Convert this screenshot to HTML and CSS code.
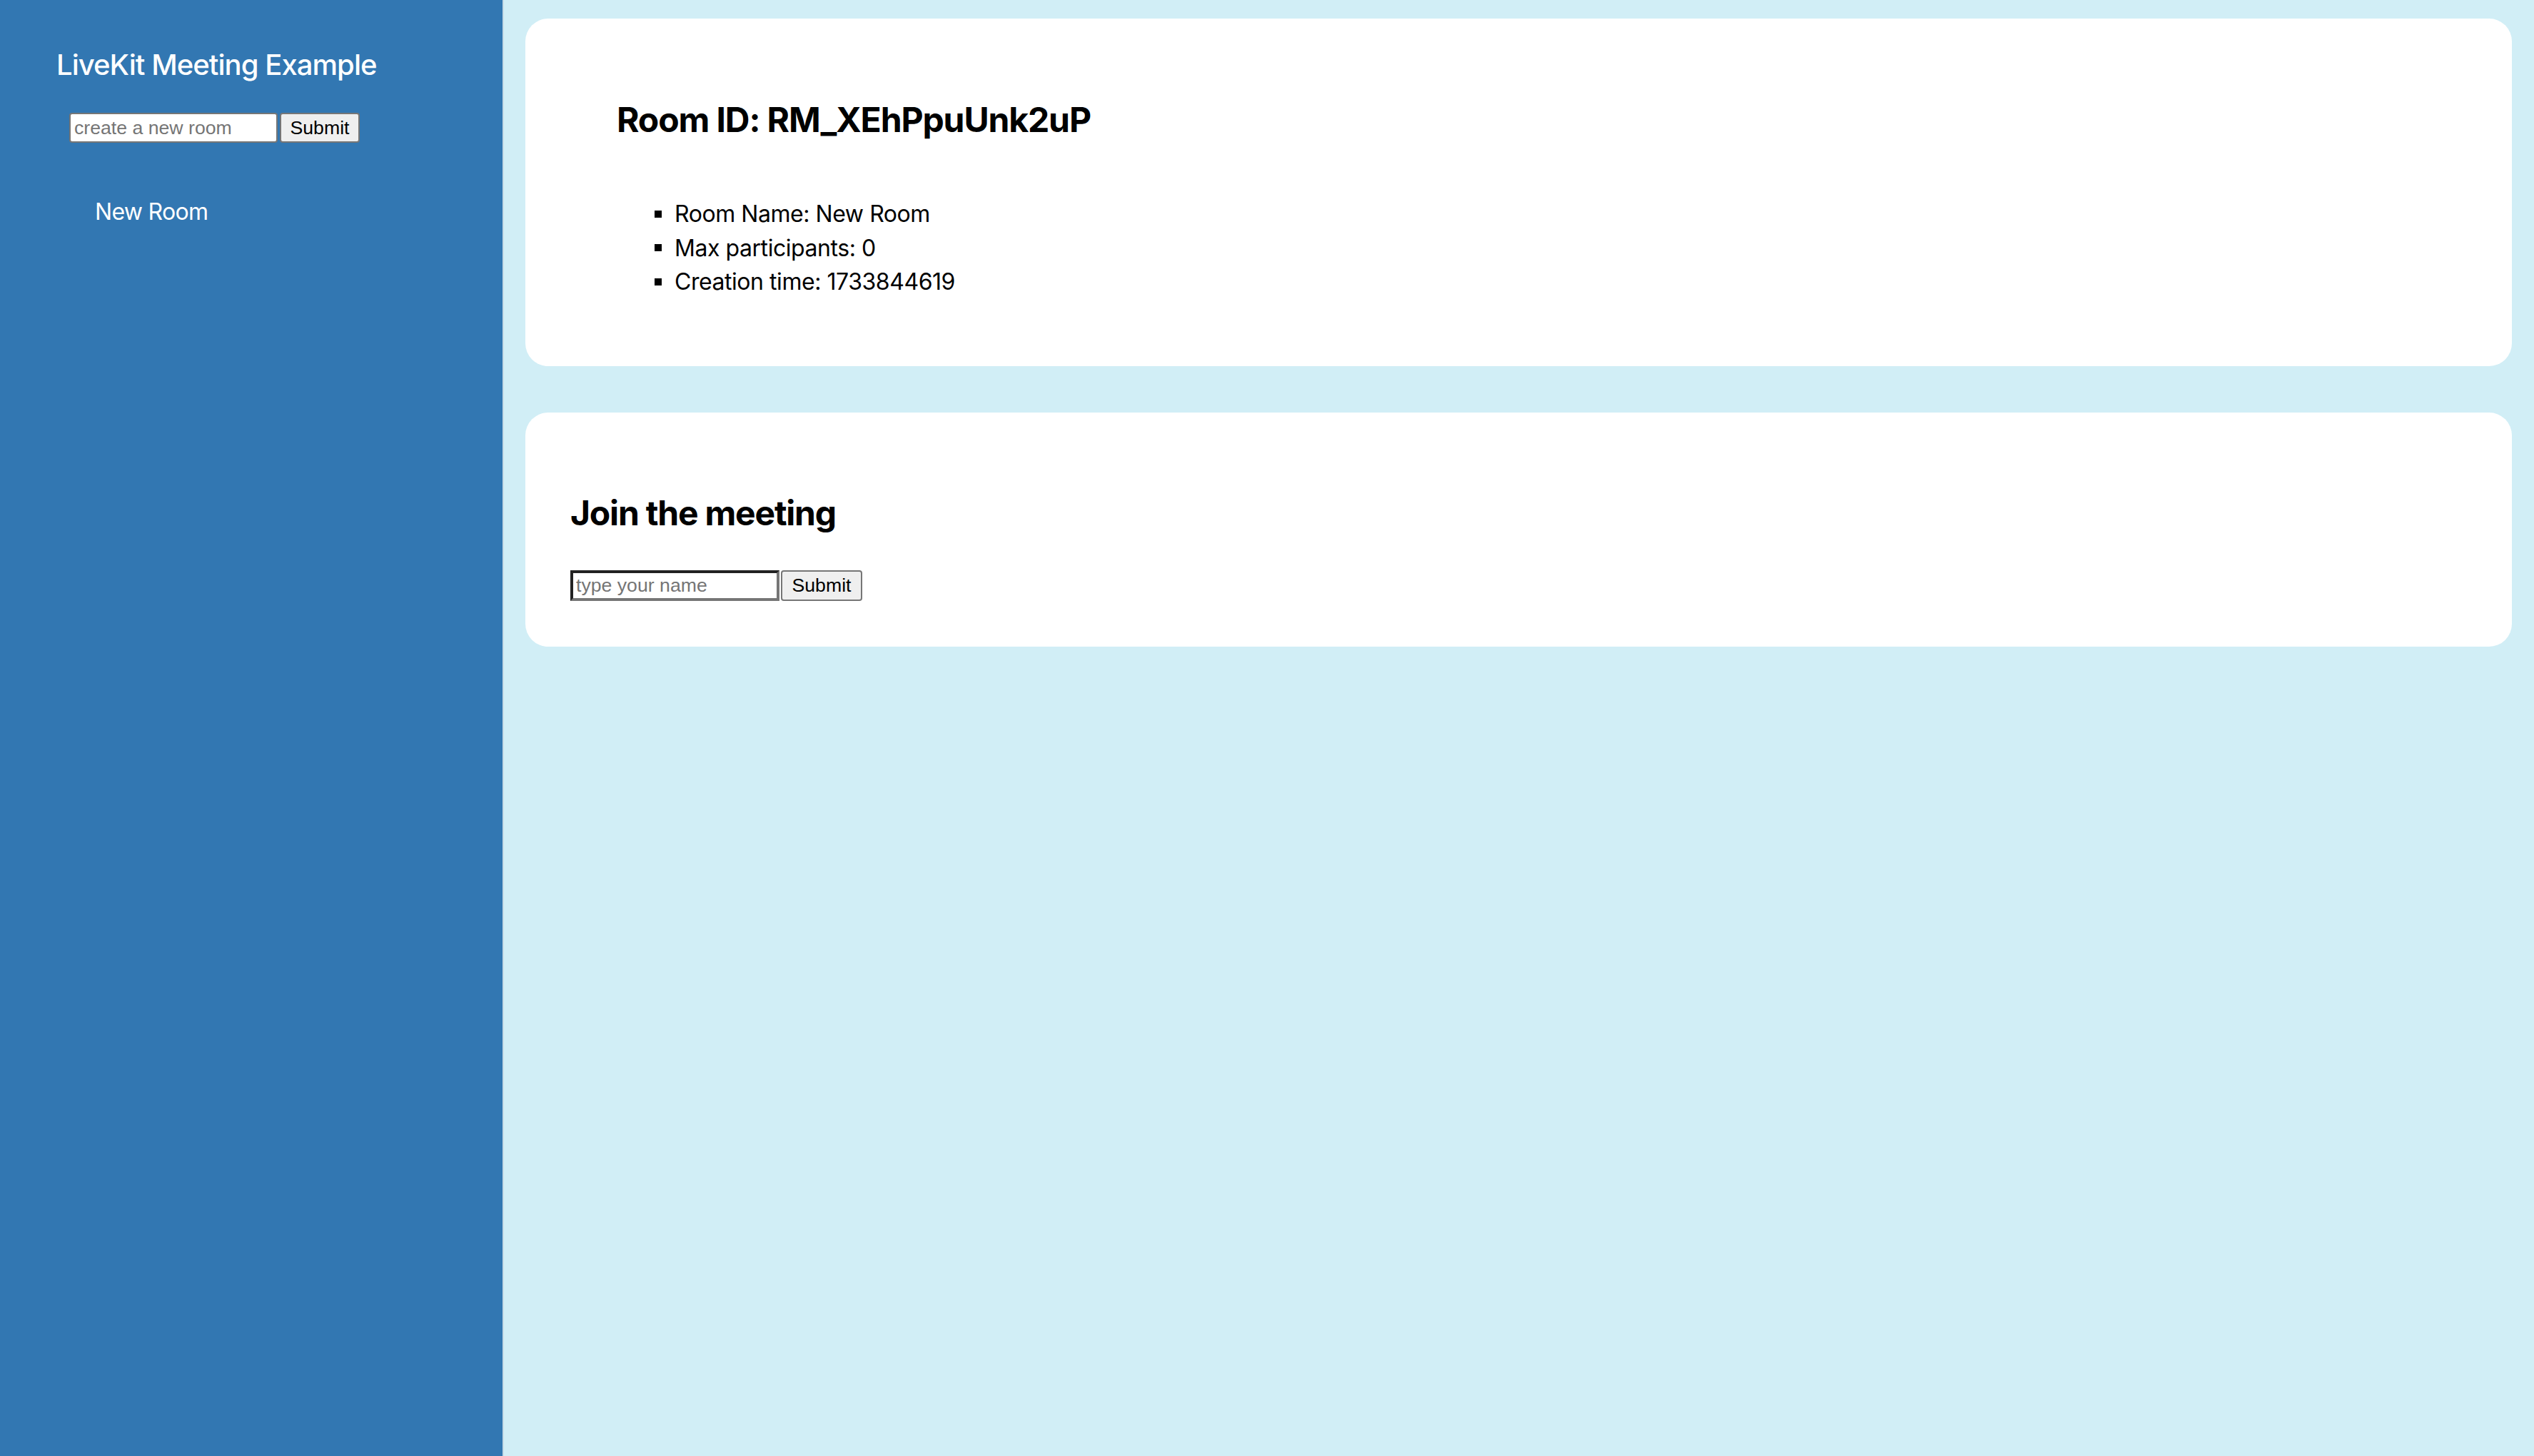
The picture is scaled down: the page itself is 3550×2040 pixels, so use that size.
FILE: index.html
```html
<!DOCTYPE html>
<html lang="en">
<head>
<meta charset="utf-8">
<title>LiveKit Meeting Example</title>
<link rel="stylesheet" href="styles.css">
</head>
<body>
  <aside class="sidebar">
    <h1 class="brand">LiveKit Meeting Example</h1>
    <form class="inline-form create-form">
      <input class="text-input" type="text" placeholder="create a new room">
      <button class="submit-btn" type="button">Submit</button>
    </form>
    <ul class="room-list">
      <li class="room-link">New Room</li>
    </ul>
  </aside>
  <main class="main">
    <section class="card room-card">
      <h2 class="card-title">Room ID: RM_XEhPpuUnk2uP</h2>
      <ul class="info-list">
        <li class="info-item"><span class="bullet"></span><span>Room Name: New Room</span></li>
        <li class="info-item"><span class="bullet"></span><span>Max participants: 0</span></li>
        <li class="info-item"><span class="bullet"></span><span>Creation time: 1733844619</span></li>
      </ul>
    </section>
    <section class="card join-card">
      <h2 class="card-title join-title">Join the meeting</h2>
      <form class="inline-form join-form">
        <input class="text-input name-input" type="text" placeholder="type your name">
        <button class="submit-btn" type="button">Submit</button>
      </form>
    </section>
  </main>
</body>
</html>
```

FILE: styles.css
```css
* { box-sizing: border-box; }

html, body {
  margin: 0;
  padding: 0;
  height: 100%;
}

body {
  display: flex;
  min-height: 2040px;
  font-family: Inter, "Noto Sans", sans-serif;
  background: #d1eef6;
}

.sidebar {
  width: 706px;
  flex: 0 0 706px;
  background: #3277b2;
  border-right: 2px solid #c6dbe6;
  padding: 67px 0 0 0;
  color: #ffffff;
}

.brand {
  margin: 0 0 0 79px;
  font-size: 40px;
  line-height: 48px;
  font-weight: 500;
  letter-spacing: -0.95px;
}

.inline-form {
  display: flex;
  align-items: stretch;
  gap: 3px;
}

.create-form {
  margin: 43px 0 0 97px;
}

.text-input {
  width: 292px;
  height: 42px;
  margin: 0;
  padding: 2px 5px;
  border: 2px solid #767676;
  border-radius: 4px;
  background: #ffffff;
  font-family: "Liberation Sans", Arial, sans-serif;
  font-size: 26.67px;
  color: #000;
}

.text-input::placeholder {
  color: #757575;
}

.name-input {
  width: 293px;
  height: 43px;
  padding: 2px 4px;
  border-width: 4px;
  border-style: solid;
  border-color: #222222 #767676 #767676 #222222;
  border-radius: 0;
}

.submit-btn {
  width: 112px;
  margin: 0;
  padding: 0;
  background: #efefef;
  border: 2px solid #767676;
  border-radius: 4px;
  font-family: "Liberation Sans", Arial, sans-serif;
  font-size: 26.67px;
  color: #000;
}

.join-form .submit-btn {
  width: 114px;
}

.room-list {
  list-style: none;
  margin: 77px 0 0 0;
  padding: 0 0 0 133px;
}

.room-link {
  font-size: 32px;
  line-height: 40px;
  font-weight: 400;
  letter-spacing: -0.7px;
}

.main {
  flex: 1;
  display: flex;
  flex-direction: column;
  gap: 65px;
  padding: 26px 31px 0 30px;
}

.card {
  background: #ffffff;
  border-radius: 32px;
}

.room-card {
  padding: 113px 0 94px 128px;
}

.join-card {
  padding: 112px 0 64px 63px;
}

.card-title {
  margin: 0;
  font-size: 48px;
  line-height: 58px;
  font-weight: 700;
  color: #000;
  letter-spacing: -1.1px;
}

.join-title {
  letter-spacing: -1.2px;
}

.info-list {
  list-style: none;
  margin: 79px 0 0 0;
  padding: 0 0 0 53px;
}

.info-item {
  display: flex;
  align-items: center;
  gap: 18px;
  font-size: 32px;
  line-height: 47.5px;
  color: #000;
  letter-spacing: -0.45px;
}

.bullet {
  width: 10px;
  height: 10px;
  background: #000;
  flex: 0 0 10px;
}

.join-form {
  margin-top: 51px;
  gap: 2px;
}
```
